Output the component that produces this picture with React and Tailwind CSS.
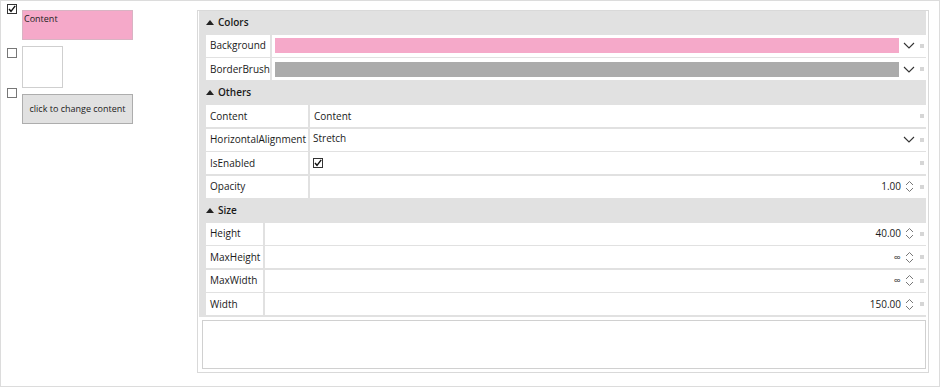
import React from "react";

const font = { fontFamily: '"Open Sans", "Noto Sans", sans-serif' };

function Square() {
  return <div className="w-[4px] h-[4px] bg-[#d6d6d6] ml-[5px] mr-[2px] shrink-0" />;
}

function Chevron() {
  return (
    <div className="w-[12px] shrink-0 flex items-center justify-center">
      <svg width="12" height="7" viewBox="0 0 12 7">
        <path d="M1 1 L6 6 L11 1" fill="none" stroke="#333" strokeWidth="1.1" />
      </svg>
    </div>
  );
}

function Spinner() {
  return (
    <div className="w-[12px] shrink-0 flex items-center pl-[2px]">
      <svg width="9" height="13" viewBox="0 0 9 13">
        <path d="M1 5 L4.5 1.5 L8 5" fill="none" stroke="#777" strokeWidth="1" />
        <path d="M1 8 L4.5 11.5 L8 8" fill="none" stroke="#777" strokeWidth="1" />
      </svg>
    </div>
  );
}

function Check({ checked, dark }) {
  return (
    <div
      className={
        "w-[10px] h-[10px] border bg-white flex items-center justify-center shrink-0 " +
        (dark ? "border-[#333]" : "border-[#777]")
      }
    >
      {checked && (
        <svg width="8" height="8" viewBox="0 0 8 8">
          <path d="M1 4 L3 6.3 L7.2 0.8" fill="none" stroke="#111" strokeWidth="1.4" />
        </svg>
      )}
    </div>
  );
}

function Header({ title }) {
  return (
    <div className="h-[22px] flex items-center gap-[4px] text-[10px] font-semibold text-[#1a1a1a]">
      <svg width="8" height="5" viewBox="0 0 8 5">
        <polygon points="0,5 4,0 8,5" fill="#222" />
      </svg>
      <span>{title}</span>
    </div>
  );
}

function Name({ children }) {
  return (
    <div className="h-[22px] bg-white pl-[4px] flex items-center text-[10px] text-[#1a1a1a] whitespace-nowrap overflow-hidden">
      {children}
    </div>
  );
}

function Value({ children, trailing }) {
  return (
    <div className="h-[22px] bg-white flex items-center text-[10px] text-[#1a1a1a]">
      <div className="flex-1 flex items-center min-w-0 h-full">{children}</div>
      {trailing}
      <Square />
    </div>
  );
}

export default function App() {
  return (
    <div
      className="w-[940px] h-[387px] border border-[#dcdcdc] bg-white flex overflow-hidden"
      style={font}
    >
      {/* left */}
      <div className="w-[196px] shrink-0 flex flex-col pl-[6px] pt-[3px]">
        <div className="h-[36px] flex items-start gap-[5px]">
          <Check checked dark />
          <div className="mt-[6px] w-[111px] h-[30px] bg-[#f5a9c9] border border-[#d9b3c3] text-[9px] text-[#222] leading-none pl-[1px] pt-[3px]">
            Content
          </div>
        </div>
        <div className="h-[48px] flex items-start gap-[5px]">
          <div className="mt-[8px]">
            <Check />
          </div>
          <div className="mt-[6px] w-[41px] h-[42px] bg-white border border-[#cfcfcf]" />
        </div>
        <div className="h-[36px] flex items-start gap-[5px]">
          <Check />
          <div className="mt-[6px] w-[111px] h-[30px] bg-[#e1e1e1] border border-[#adadad] flex items-center justify-center text-[9px] text-[#222]">
            click to change content
          </div>
        </div>
      </div>

      {/* property grid */}
      <div className="mt-[9px] w-[732px] h-[363px] border border-[#d9d9d9] flex flex-col shrink-0">
        <div className="ml-px mr-[2px] bg-[#e1e1e1] pl-[7px] pb-[2px] flex flex-col gap-[1.5px]">
          <Header title="Colors" />
          <div className="grid grid-cols-[64px_1fr] gap-x-[2px] gap-y-[1.5px]">
            <Name>Background</Name>
            <Value trailing={<><div className="w-[4px]" /><Chevron /></>}>
              <div className="ml-[3px] flex-1 h-[15px] bg-[#f5a9c9]" />
            </Value>
            <Name>BorderBrush</Name>
            <Value trailing={<><div className="w-[4px]" /><Chevron /></>}>
              <div className="ml-[3px] flex-1 h-[15px] bg-[#ababab]" />
            </Value>
          </div>
          <Header title="Others" />
          <div className="grid grid-cols-[102px_1fr] gap-x-[2px] gap-y-[1.5px]">
            <Name>Content</Name>
            <Value>
              <span className="pl-[4px]">Content</span>
            </Value>
            <Name>HorizontalAlignment</Name>
            <Value trailing={<Chevron />}>
              <span className="pl-[3px] self-start pt-[2px]">Stretch</span>
            </Value>
            <Name>IsEnabled</Name>
            <Value>
              <div className="pl-[3px]">
                <Check checked dark />
              </div>
            </Value>
            <Name>Opacity</Name>
            <Value trailing={<Spinner />}>
              <span className="ml-auto pr-[2px]">1.00</span>
            </Value>
          </div>
          <Header title="Size" />
          <div className="grid grid-cols-[57px_1fr] gap-x-[2px] gap-y-[1.5px]">
            <Name>Height</Name>
            <Value trailing={<Spinner />}>
              <span className="ml-auto pr-[2px]">40.00</span>
            </Value>
            <Name>MaxHeight</Name>
            <Value trailing={<Spinner />}>
              <span className="ml-auto pr-[2px]">∞</span>
            </Value>
            <Name>MaxWidth</Name>
            <Value trailing={<Spinner />}>
              <span className="ml-auto pr-[2px]">∞</span>
            </Value>
            <Name>Width</Name>
            <Value trailing={<Spinner />}>
              <span className="ml-auto pr-[2px]">150.00</span>
            </Value>
          </div>
        </div>
        <div className="mt-[3px] ml-[4px] mr-[2px] h-[49px] border border-[#d0d0d0] bg-white" />
      </div>
    </div>
  );
}
